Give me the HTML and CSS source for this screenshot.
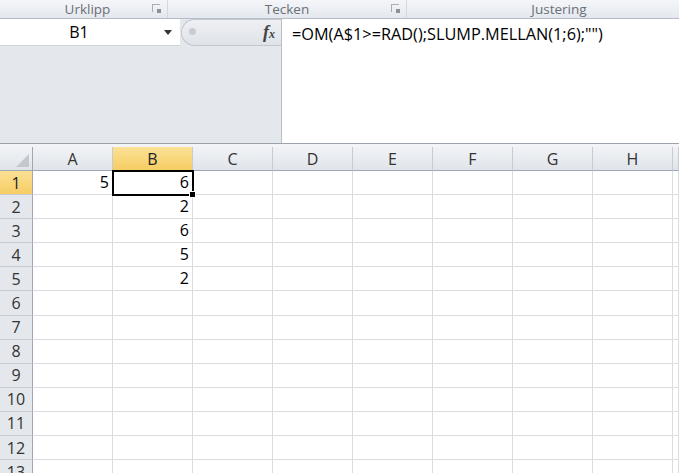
FILE: index.html
```html
<!DOCTYPE html>
<html lang="sv">
<head>
  <meta charset="UTF-8">
  <title>Excel</title>
  <link rel="stylesheet" href="styles.css">
</head>
<body>
  <!-- Ribbon group labels -->
  <div class="ribbon">
    <div class="group g1"><span>Urklipp</span><i class="launch"></i></div>
    <div class="group g2"><span>Tecken</span><i class="launch"></i></div>
    <div class="group g3"><span>Justering</span></div>
  </div>

  <!-- Formula bar -->
  <div class="fbar">
    <div class="left">
      <div class="top">
        <div class="namebox"><span>B1</span><i class="arrow"></i></div>
        <div class="pill"><i class="dot"></i><span class="fx">f<small>x</small></span></div>
      </div>
      <div class="fill"></div>
    </div>
    <div class="formula">=OM(A$1&gt;=RAD();SLUMP.MELLAN(1;6);"")</div>
  </div>
  <div class="gap"></div>

  <!-- Sheet -->
  <div class="sheet" id="sheet"></div>

  <script>
    var cols = ["A", "B", "C", "D", "E", "F", "G", "H", ""];
    var data = { "A1": 5, "B1": 6, "B2": 2, "B3": 6, "B4": 5, "B5": 2 };
    var sheet = document.getElementById("sheet");

    var corner = document.createElement("div");
    corner.className = "hd corner";
    sheet.appendChild(corner);
    cols.forEach(function (c) {
      var h = document.createElement("div");
      h.className = "hd col" + (c === "B" ? " on" : "");
      h.textContent = c;
      sheet.appendChild(h);
    });

    for (var r = 1; r <= 13; r++) {
      var rh = document.createElement("div");
      rh.className = "hd row" + (r === 1 ? " on" : "");
      rh.textContent = r;
      sheet.appendChild(rh);
      cols.forEach(function (c) {
        var cell = document.createElement("div");
        cell.className = "cell";
        var key = c + r;
        if (data[key] !== undefined) cell.textContent = data[key];
        if (key === "B1") cell.className += " sel";
        sheet.appendChild(cell);
      });
    }
  </script>
</body>
</html>
```

FILE: styles.css
```css
body {
  margin: 0;
  width: 679px;
  height: 473px;
  overflow: hidden;
  font-family: "Open Sans", "DejaVu Sans", sans-serif;
  background: #fff;
  color: #000;
}
.ribbon {
  display: flex;
  height: 18px;
  background: linear-gradient(#f4f6f9, #e4e8ee);
  border-bottom: 1px solid #b6bcc6;
}
.group {
  position: relative;
  display: flex;
  justify-content: center;
  align-items: center;
  font-size: 13.5px;
  color: #6b6f76;
  border-right: 1px solid #d3d8df;
}
.g1 { width: 167px; }
.g2 { width: 238px; }
.g3 { flex: 1; border-right: none; }
.g1 span { margin-left: 8px; }
.g2 span { margin-left: 0; }
.g3 span { margin-left: 32px; }
.launch {
  position: absolute;
  right: 7px;
  top: 4px;
  width: 8px;
  height: 8px;
  border-top: 1px solid #a9aeb6;
  border-left: 1px solid #a9aeb6;
  box-sizing: border-box;
}
.launch::after {
  content: "";
  position: absolute;
  right: -1px;
  bottom: -1px;
  width: 4px;
  height: 4px;
  background: #8c929b;
}
.fbar {
  display: flex;
  height: 124px;
  border-bottom: 1px solid #9ca3ad;
}
.left {
  width: 281px;
  display: flex;
  flex-direction: column;
  background: #e4e7eb;
  border-right: 1px solid #b9bec6;
}
.top {
  display: flex;
  height: 27px;
}
.namebox {
  width: 180px;
  background: #fff;
  display: flex;
  align-items: center;
  position: relative;
  font-size: 16px;
  border-bottom: 1px solid #cfd4da;
}
.namebox span {
  width: 158px;
  text-align: center;
}
.arrow {
  position: absolute;
  left: 164px;
  top: 11px;
  border-left: 4px solid transparent;
  border-right: 4px solid transparent;
  border-top: 5px solid #333;
}
.pill {
  flex: 1;
  position: relative;
  background: linear-gradient(#eef0f3, #dfe3e8);
  border: 1px solid #c3c8cf;
  border-right: none;
  border-radius: 14px 0 0 14px;
  margin-left: 1px;
}
.dot {
  position: absolute;
  left: 7px;
  top: 8px;
  width: 7px;
  height: 7px;
  border-radius: 50%;
  background: #c7ccd3;
}
.fx {
  position: absolute;
  right: 6px;
  top: 2px;
  font-family: "Liberation Serif", serif;
  font-style: italic;
  font-weight: bold;
  font-size: 18px;
  color: #444;
}
.fx small { font-size: 12px; }
.fill { flex: 1; }
.formula {
  flex: 1;
  background: #fff;
  padding: 4px 0 0 10px;
  font-size: 16.3px;
}
.gap {
  height: 3px;
  background: #f2f4f7;
}
.sheet {
  display: grid;
  grid-template-columns: 33px repeat(8, 80px) 6px;
  grid-template-rows: 24px;
  grid-auto-rows: 24.1px;
}
.hd {
  background: linear-gradient(#f1f3f6, #e0e4ea);
  color: #333;
  font-size: 16px;
  display: flex;
  align-items: center;
  justify-content: center;
  box-sizing: border-box;
}
.hd.col {
  border-right: 1px solid #c7ccd3;
  border-bottom: 1px solid #9ea8b5;
}
.hd.row {
  border-right: 1px solid #9ea8b5;
  border-bottom: 1px solid #c7ccd3;
  background: #e4e8ed;
}
.hd.on {
  background: linear-gradient(#fbe196, #f6cd63);
  color: #222;
}
.corner {
  position: relative;
  border-right: 1px solid #9ea8b5;
  border-bottom: 1px solid #9ea8b5;
}
.corner::after {
  content: "";
  position: absolute;
  right: 3px;
  bottom: 3px;
  border-left: 13px solid transparent;
  border-bottom: 13px solid #c3c8ce;
}
.cell {
  box-sizing: border-box;
  border-right: 1px solid #dadcdd;
  border-bottom: 1px solid #dadcdd;
  font-size: 16px;
  text-align: right;
  padding: 0 3px 0 0;
  line-height: 23px;
  position: relative;
}
.sel {
  outline: 2px solid #000;
  outline-offset: -1px;
  z-index: 1;
}
.sel::after {
  content: "";
  position: absolute;
  right: -4px;
  bottom: -4px;
  width: 5px;
  height: 5px;
  background: #000;
  border: 1px solid #fff;
}
```
